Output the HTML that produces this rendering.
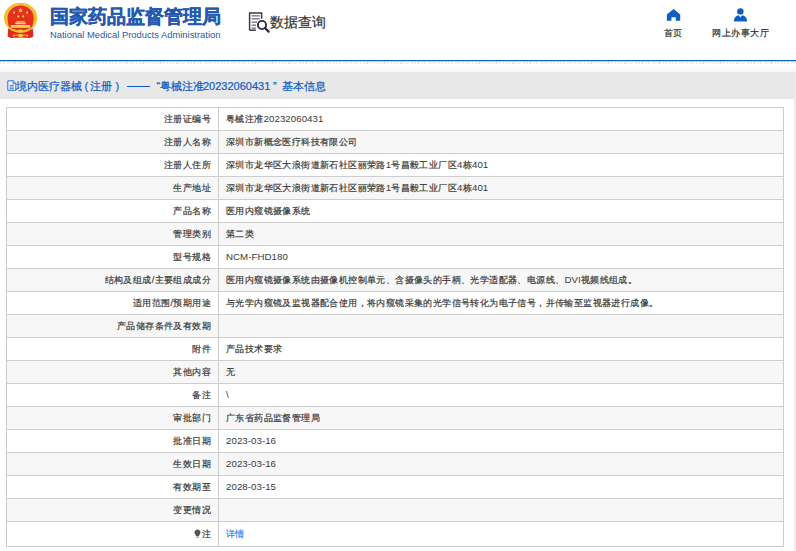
<!DOCTYPE html>
<html><head><meta charset="utf-8">
<style>
html,body{margin:0;padding:0;background:#fff;}
body{width:796px;height:551px;overflow:hidden;position:relative;font-family:"Liberation Sans",sans-serif;}
.abs{position:absolute;}
#emblem{left:0;top:0;width:42px;height:42px;}
#title{left:50px;top:5px;font-size:19px;font-weight:bold;color:#2459b0;-webkit-text-stroke:0.3px #2459b0;white-space:nowrap;line-height:24px;letter-spacing:0px;}
#sub{left:50px;top:29px;font-size:9.4px;color:#2459ad;white-space:nowrap;line-height:12px;}
#qicon{left:248px;top:11px;width:23px;height:23px;}
#qtext{-webkit-text-stroke-width:0.2px;left:270px;top:11.5px;font-size:14px;color:#333;line-height:20px;white-space:nowrap;}
#home{left:666px;top:8px;width:15px;height:14px;}
#hometxt{-webkit-text-stroke-width:0.2px;left:664px;top:27px;font-size:9.33px;color:#333;line-height:12px;white-space:nowrap;}
#user{left:732px;top:7px;width:16px;height:15px;}
#usertxt{-webkit-text-stroke-width:0.2px;left:712px;top:27px;letter-spacing:0.5px;font-size:9.33px;color:#333;line-height:12px;white-space:nowrap;}
#blueline{left:0;top:60px;width:796px;height:2px;background:linear-gradient(#0c5fc3 0,#0c5fc3 50%,#c2d8f2 50%,#c2d8f2 100%);}
#dash{left:0;top:62px;width:796px;height:2px;background:repeating-linear-gradient(135deg,#fff 0,#fff 1px,#e0e0e0 1px,#e0e0e0 1.8px,#fff 1.8px,#fff 2.4px);}
#fade{left:0;top:64px;width:796px;height:8px;background:linear-gradient(#fff,#f7f7f7);}
#bar{left:0;top:72px;width:794px;height:27px;background:#e8e8e8;}
#bartxt{-webkit-text-stroke-width:0.2px;left:7px;top:79px;font-size:11px;color:#0b5bc6;line-height:14px;white-space:nowrap;}
#box{left:794px;top:72px;width:2px;height:479px;background:#ececec;}
table{position:absolute;left:6px;top:107px;border-collapse:collapse;width:778px;table-layout:fixed;}
td{-webkit-text-stroke-width:0.2px;border:1px solid #cdcdcd;height:22px;padding:0;font-size:9px;letter-spacing:0.4px;color:#3a3a3a;line-height:12px;white-space:nowrap;}
td.l{width:204px;text-align:right;padding-right:7px;}
td.v{padding-left:7px;}
tr:nth-child(even) td{background:#f7f7f7;}
tr.last td{height:24px;}
.n{font-size:9.7px;letter-spacing:0.05px;-webkit-text-stroke-width:0;}
a{color:#2d84f5;text-decoration:none;}
</style></head><body>
<svg id="emblem" class="abs" viewBox="0 0 42 42">
  <path d="M8.2 28.5 L7.6 36.6 Q9 37.8 12 37.9 L20.6 37.4 L29 37.9 Q32 37.8 33.4 36.6 L32.8 28.5 Z" fill="#e2271d"/>
  <ellipse cx="20.6" cy="17.8" rx="16.7" ry="15" fill="#f3c030"/>
  <path d="M7.6 17.4 A13 12 0 0 1 33.6 17.4 C33.6 22 33 25 31.8 27 Q27 30.4 20.6 30.5 Q14.2 30.4 9.4 27 C8.2 25 7.6 22 7.6 17.4 Z" fill="#e6301f"/>
  <polygon points="20.6,7.4 21.3,9.4 23.3,9.4 21.7,10.6 22.3,12.6 20.6,11.4 18.9,12.6 19.5,10.6 17.9,9.4 19.9,9.4" fill="#f9d43c"/>
  <circle cx="14.1" cy="12.6" r="1.1" fill="#f9d43c"/>
  <circle cx="27.1" cy="12.6" r="1.1" fill="#f9d43c"/>
  <circle cx="18.3" cy="16.4" r="1.1" fill="#f9d43c"/>
  <circle cx="23.2" cy="16.4" r="1.1" fill="#f9d43c"/>
  <rect x="16.5" y="21.2" width="8.1" height="1.1" fill="#f8d35a"/>
  <rect x="15.3" y="22.5" width="10.5" height="1.7" fill="#f8d86a"/>
  <rect x="10.8" y="25" width="19.3" height="2.8" fill="#f8d35a"/>
  
  <ellipse cx="20.5" cy="31" rx="2.8" ry="1.5" fill="#f6cc3a"/>
  <path d="M13 35.1 H28.2" stroke="#f6d040" stroke-width="0.9"/>
  <ellipse cx="20.7" cy="35.4" rx="2.6" ry="1.5" fill="#f6d040"/>
  <path d="M13.2 35 L14.4 37.6 M27.8 35 L26.8 37.6" stroke="#f6d040" stroke-width="0.9"/>
</svg>
<div id="title" class="abs">国家药品监督管理局</div>
<div id="sub" class="abs">National Medical Products Administration</div>
<svg id="qicon" class="abs" viewBox="0 0 23 23">
  <path d="M1.6 19.3 V1.9 H13.6 V7.8 M1.6 19.3 H7.8" fill="none" stroke="#3a3a48" stroke-width="1.5"/>
  <rect x="3.6" y="4.3" width="8" height="1.1" fill="#55556a"/>
  <rect x="3.6" y="7.3" width="8" height="1.1" fill="#55556a"/>
  <rect x="3.6" y="10.6" width="5.4" height="1.1" fill="#55556a"/>
  <rect x="3.6" y="13.6" width="4.4" height="1.1" fill="#55556a"/>
  <rect x="3.6" y="16.6" width="4.4" height="1.1" fill="#55556a"/>
  <circle cx="14" cy="14" r="4.1" fill="none" stroke="#2a2a3c" stroke-width="1.9"/>
  <path d="M17 17 L20.6 20.6" stroke="#2a2a3c" stroke-width="2.3" stroke-linecap="round"/>
</svg>
<div id="qtext" class="abs">数据查询</div>
<svg id="home" class="abs" viewBox="0 0 15 14">
  <path d="M7.6 0.9 L14.2 6.6 V12.8 H9.8 V9.2 H5.4 V12.8 H0.9 V6.6 Z" fill="#0d5ec4"/>
</svg>
<div id="hometxt" class="abs">首页</div>
<svg id="user" class="abs" viewBox="0 0 16 15">
  <circle cx="8.4" cy="4.4" r="3.2" fill="#0d5ec4"/>
  <path d="M1.9 14.6 C1.9 10.2 4.5 8.3 8.4 8.3 C12.3 8.3 15.1 10.2 15.1 14.6 Z" fill="#0d5ec4"/>
  <path d="M6.5 8.1 L10.3 8.1 L8.4 10.6 Z" fill="#fff"/>
</svg>
<div id="usertxt" class="abs">网上办事大厅</div>
<div id="blueline" class="abs"></div>
<div id="dash" class="abs"></div><div id="fade" class="abs"></div>
<div id="bar" class="abs"></div>
<div id="bartxt" class="abs">
<svg class="abs" style="left:0;top:1px" width="10" height="12" viewBox="0 0 10 12"><path d="M0.8 0.8 H6.2 L8.8 3.4 V10.3 H0.8 Z" fill="#f6f8fc" stroke="#2a6fd6" stroke-width="1"/><path d="M6 0.8 V3.6 H8.8" fill="none" stroke="#2a6fd6" stroke-width="0.9"/><path d="M2.6 5.3 H6.8 M2.6 7 H6.8 M2.6 8.7 H6.8" stroke="#2a6fd6" stroke-width="0.9"/></svg>
<span class="abs" style="left:9px">境内医疗器械</span>
<span class="abs" style="left:77.6px">(</span>
<span class="abs" style="left:83.3px">注册</span>
<span class="abs" style="left:108.4px">)</span>
<div class="abs" style="left:119.5px;top:7px;width:23.5px;height:1px;background:#0b5bc6"></div>
<span class="abs" style="left:149.4px">“</span>
<span class="abs" style="left:152.5px">粤械注准</span>
<span class="abs" style="left:196px">20232060431</span>
<span class="abs" style="left:266px">”</span>
<span class="abs" style="left:275.2px">基本信息</span>
</div>
<div id="box" class="abs"></div>
<table>
<tr><td class="l">注册证编号</td><td class="v">粤械注准<span class="n">20232060431</span></td></tr>
<tr><td class="l">注册人名称</td><td class="v">深圳市新概念医疗科技有限公司</td></tr>
<tr><td class="l">注册人住所</td><td class="v">深圳市龙华区大浪街道新石社区丽荣路<span class="n">1</span>号昌毅工业厂区<span class="n">4</span>栋<span class="n">401</span></td></tr>
<tr><td class="l">生产地址</td><td class="v">深圳市龙华区大浪街道新石社区丽荣路<span class="n">1</span>号昌毅工业厂区<span class="n">4</span>栋<span class="n">401</span></td></tr>
<tr><td class="l">产品名称</td><td class="v">医用内窥镜摄像系统</td></tr>
<tr><td class="l">管理类别</td><td class="v">第二类</td></tr>
<tr><td class="l">型号规格</td><td class="v"><span class="n">NCM-FHD180</span></td></tr>
<tr><td class="l">结构及组成/主要组成成分</td><td class="v">医用内窥镜摄像系统由摄像机控制单元、含摄像头的手柄、光学适配器、电源线、<span class="n">DVI</span>视频线组成。</td></tr>
<tr><td class="l">适用范围/预期用途</td><td class="v">与光学内窥镜及监视器配合使用，将内窥镜采集的光学信号转化为电子信号，并传输至监视器进行成像。</td></tr>
<tr><td class="l">产品储存条件及有效期</td><td class="v"></td></tr>
<tr><td class="l">附件</td><td class="v">产品技术要求</td></tr>
<tr><td class="l">其他内容</td><td class="v">无</td></tr>
<tr><td class="l">备注</td><td class="v"><span class="n">\</span></td></tr>
<tr><td class="l">审批部门</td><td class="v">广东省药品监督管理局</td></tr>
<tr><td class="l">批准日期</td><td class="v"><span class="n">2023-03-16</span></td></tr>
<tr><td class="l">生效日期</td><td class="v"><span class="n">2023-03-16</span></td></tr>
<tr><td class="l">有效期至</td><td class="v"><span class="n">2028-03-15</span></td></tr>
<tr><td class="l">变更情况</td><td class="v"></td></tr>
<tr class="last"><td class="l"><svg width="7" height="9" viewBox="0 0 7 9" style="vertical-align:-1px;margin-right:1px"><path d="M3.5 0.5 C1.5 0.5 0.5 2 0.5 3.5 C0.5 5 1.8 5.8 2 7 H5 C5.2 5.8 6.5 5 6.5 3.5 C6.5 2 5.5 0.5 3.5 0.5 Z" fill="#555"/><rect x="2.2" y="7.5" width="2.6" height="1.2" fill="#888"/></svg>注</td><td class="v"><a>详情</a></td></tr>
</table>
</body></html>
